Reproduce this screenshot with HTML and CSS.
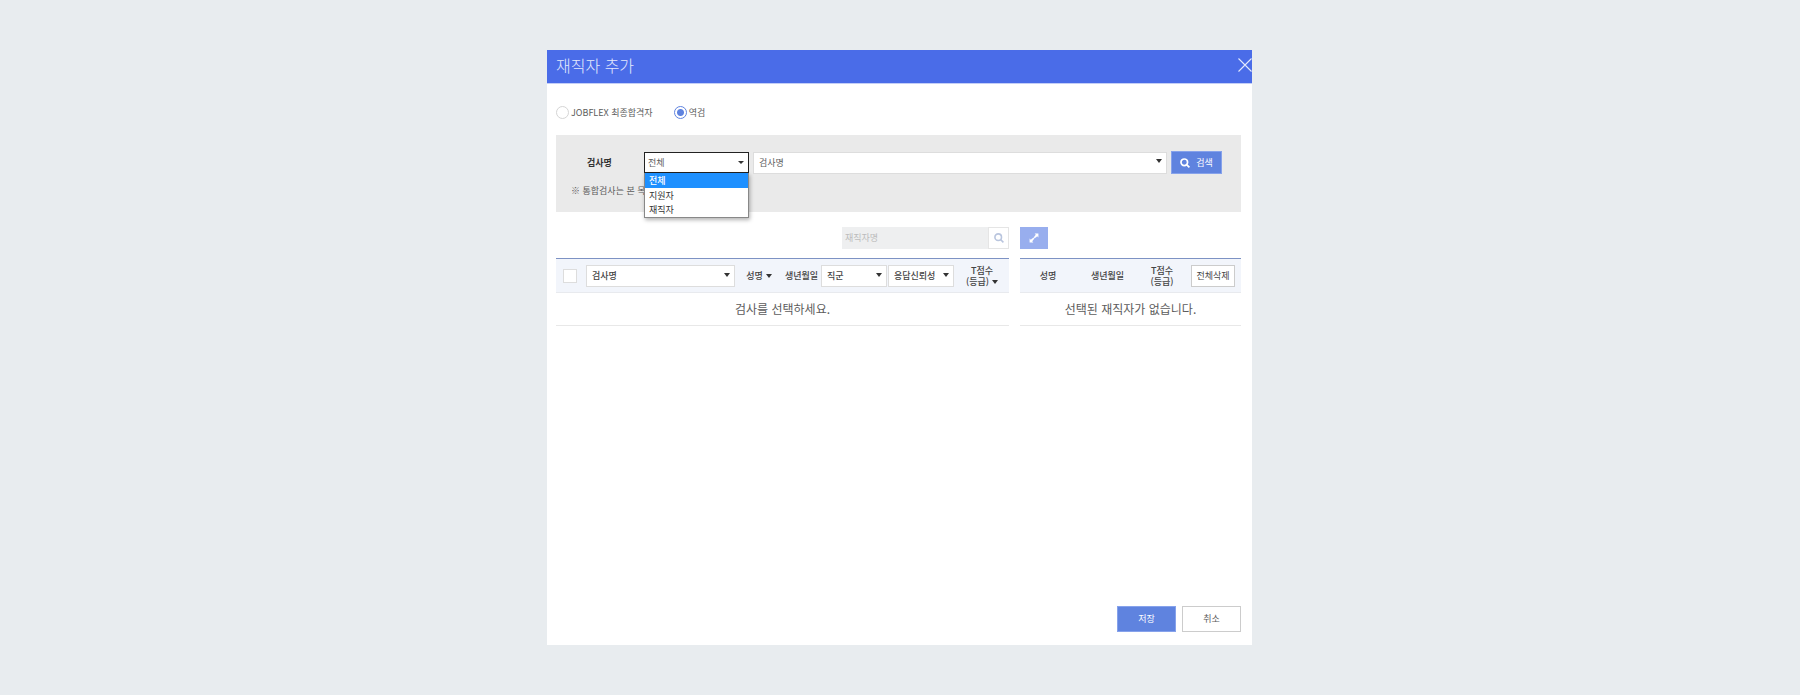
FILE: index.html
```html
<!DOCTYPE html>
<html lang="ko">
<head>
<meta charset="utf-8">
<title>재직자 추가</title>
<link rel="stylesheet" href="styles.css">
</head>
<body>
<main class="modal">
  <header class="modal-header">
    <h1 class="modal-title">재직자 추가</h1>
    <button class="close" type="button" aria-label="닫기">
      <svg viewBox="0 0 14 14" width="14" height="14" fill="none" stroke="currentColor" stroke-width="1.1"><path d="M.5.5l13 13M13.5.5l-13 13"/></svg>
    </button>
  </header>

  <div class="modal-body">
    <div class="sources">
      <label class="radio"><input type="radio" name="source">JOBFLEX 최종합격자</label>
      <label class="radio"><input type="radio" name="source" checked>역검</label>
    </div>

    <form class="filter">
      <div class="filter-row">
        <label class="filter-label" for="target">검사명</label>
        <div class="select target-select">
          <select id="target"><option>전체</option><option>지원자</option><option>재직자</option></select>
          <ul class="options">
            <li class="option option-active">전체</li>
            <li class="option">지원자</li>
            <li class="option">재직자</li>
          </ul>
        </div>
        <div class="select test-select">
          <select aria-label="검사명 선택"><option>검사명</option></select>
        </div>
        <button class="search-button" type="button">
          <svg viewBox="0 0 10 10" width="10" height="10" fill="none" stroke="currentColor" stroke-width="1.7"><circle cx="4.3" cy="4.3" r="3.3"/><path d="M6.6 6.6L9.4 9.4"/></svg>
          검색
        </button>
      </div>
      <p class="hint">※ 통합검사는 본 목</p>
    </form>

    <div class="lists">
      <section class="list">
        <div class="toolbar toolbar-end">
          <div class="name-search">
            <input class="name-input" type="text" placeholder="재직자명" aria-label="재직자명" disabled>
            <button class="name-button" type="button" aria-label="재직자 검색">
              <svg viewBox="0 0 10 10" width="10" height="10" fill="none" stroke="currentColor" stroke-width="1.6"><circle cx="4.2" cy="4.2" r="3.3"/><path d="M6.5 6.5L9.4 9.4"/></svg>
            </button>
          </div>
        </div>
        <table class="table">
          <colgroup><col class="c-check"><col class="c-test"><col class="c-name"><col class="c-birth"><col class="c-job"><col class="c-trust"><col></colgroup>
          <thead>
            <tr>
              <th><input class="check" type="checkbox" aria-label="전체 선택"></th>
              <th><div class="select head-select"><select aria-label="검사명"><option>검사명</option></select></div></th>
              <th><span class="sort">성명</span></th>
              <th>생년월일</th>
              <th><div class="select head-select"><select aria-label="직군"><option>직군</option></select></div></th>
              <th><div class="select head-select"><select aria-label="응답신뢰성"><option>응답신뢰성</option></select></div></th>
              <th>T점수<br><span class="sort">(등급)</span></th>
            </tr>
          </thead>
          <tbody><tr><td colspan="7">검사를 선택하세요.</td></tr></tbody>
        </table>
      </section>

      <section class="list">
        <div class="toolbar">
          <button class="expand" type="button" aria-label="확장">
            <svg viewBox="0 0 10 10" width="10" height="10" fill="currentColor"><path d="M5.6 .6H9.4V4.4L8.2 3.2L6.6 4.7L5.3 3.4L6.8 1.8ZM4.4 9.4H.6V5.6L1.8 6.8L3.4 5.3L4.7 6.6L3.2 8.2Z"/><path d="M3.2 6L6 3.2L6.8 4L4 6.8Z"/></svg>
          </button>
        </div>
        <table class="table">
          <colgroup><col class="c-picked"><col class="c-picked-birth"><col class="c-score"><col></colgroup>
          <thead>
            <tr>
              <th>성명</th>
              <th>생년월일</th>
              <th>T점수<br>(등급)</th>
              <th><button class="clear" type="button">전체삭제</button></th>
            </tr>
          </thead>
          <tbody><tr><td colspan="4">선택된 재직자가 없습니다.</td></tr></tbody>
        </table>
      </section>
    </div>
  </div>

  <footer class="modal-footer">
    <button class="action action-primary" type="button">저장</button>
    <button class="action" type="button">취소</button>
  </footer>
</main>
</body>
</html>
```
FILE: styles.css
```css
* {
  box-sizing: border-box;
}

body {
  margin: 0;
  padding: 50px 17px 50px 16px;
  background: #e8ecef;
  color: #5c5c5c;
  font-family: "Noto Sans CJK KR", sans-serif;
  font-size: 9px;
  line-height: 12px;
}

button,
input,
select {
  margin: 0;
  font: inherit;
  color: inherit;
  border-radius: 0;
}

button {
  display: flex;
  align-items: center;
  justify-content: center;
  padding: 0;
  border: 0;
  white-space: nowrap;
}

svg {
  display: block;
  flex: none;
}

.modal {
  display: flex;
  flex-direction: column;
  max-width: 705px;
  min-height: calc(100vh - 100px);
  margin: 0 auto;
  background: #fff;
}

.modal-header {
  display: flex;
  align-items: center;
  justify-content: space-between;
  height: 34px;
  padding-left: 9px;
  padding-bottom: 4px;
  background: #4a6ce8;
  border-bottom: 1px solid #c3cef7;
  color: #e3e9fd;
}

.modal-title {
  margin: 0;
  font-size: 16px;
  font-weight: 300;
  line-height: 24px;
}

.close {
  background: none;
}

.modal-body {
  padding: 22px 11px 16px 9px;
}

.sources {
  display: flex;
  gap: 21px;
}

.radio {
  display: flex;
  align-items: center;
  gap: 2px;
}

.radio input {
  appearance: none;
  width: 13px;
  height: 13px;
  border: 1px solid #d5d5d5;
  border-radius: 50%;
  background: #fff;
}

.radio input:checked {
  border-color: #5f83df;
  background: radial-gradient(circle, #5f83df 3px, #fff 4px);
}

.filter {
  margin-top: 16px;
  padding: 16px 19px 15px 15px;
  background: #eaeaea;
}

.filter-row {
  display: flex;
  align-items: center;
  gap: 4px;
}

.filter-label {
  width: 69px;
  padding-left: 16px;
  color: #333;
  font-weight: 700;
}

.select {
  position: relative;
}

.select::after {
  content: "";
  position: absolute;
  top: 8px;
  right: 5px;
  border: 3px solid transparent;
  border-top: 4px solid #333;
  border-bottom: 0;
  pointer-events: none;
}

.select select {
  display: block;
  appearance: none;
  width: 100%;
  height: 22px;
  padding: 0 5px;
  border: 1px solid #ddd;
  background: #fff;
}

.target-select {
  width: 105px;
}

.target-select select {
  height: 21px;
  padding: 0 3px;
  border-color: #222;
  outline: 0;
}

.target-select::after {
  top: 9px;
  border-top-width: 3px;
}

.options {
  position: absolute;
  z-index: 1;
  top: 100%;
  left: 0;
  right: 0;
  margin: 0;
  padding: 0;
  border: 1px solid #888;
  border-top: 0;
  background: #fff;
  box-shadow: 1px 2px 4px rgba(0, 0, 0, 0.3);
  color: #333;
  list-style: none;
}

.option {
  padding: 0 4px;
  line-height: 15px;
}

.option:last-child {
  line-height: 14px;
}

.option-active {
  background: #1e90ff;
  color: #fff;
  font-weight: 500;
}

.test-select {
  flex: 1;
}

.test-select::after {
  top: 7px;
}

.search-button {
  gap: 6px;
  width: 51px;
  height: 23px;
  border: 1px solid #86a2eb;
  background: #5f83df;
  color: #fff;
}

.hint {
  margin: 11px 0 0;
}

.lists {
  display: grid;
  grid-template-columns: 453fr 221fr;
  gap: 11px;
  margin-top: 15px;
}

.toolbar {
  display: flex;
  height: 22px;
  margin-bottom: 9px;
}

.toolbar-end {
  justify-content: flex-end;
}

.name-search {
  display: flex;
  width: 167px;
}

.name-input {
  flex: 1;
  min-width: 0;
  padding: 0 3px;
  border: 0;
  background: #eeeff0;
}

.name-input::placeholder {
  color: #bcbcbc;
}

.name-button {
  width: 21px;
  border: 1px solid #e5e5e5;
  background: #fff;
  color: #b9c5de;
}

.expand {
  width: 28px;
  background: #98aeee;
  color: #fff;
}

.table {
  width: 100%;
  table-layout: fixed;
  border-collapse: separate;
  border-spacing: 0;
  border-top: 1px solid #7d92c4;
}

.table th {
  height: 34px;
  padding: 0;
  border-bottom: 1px solid #e8eaee;
  background: #f2f5fb;
  color: #444;
  font-weight: 500;
  line-height: 11px;
  white-space: nowrap;
}

.table td {
  height: 33px;
  padding: 0;
  border-bottom: 1px solid #e8e8e8;
  font-size: 12px;
  line-height: 18px;
  text-align: center;
}

.c-check { width: 30px; }
.c-test { width: 150px; }
.c-name { width: 46px; }
.c-birth { width: 39px; }
.c-job,
.c-trust { width: 67px; }
.c-picked { width: 56px; }
.c-picked-birth { width: 63px; }
.c-score { width: 46px; }

.check {
  display: block;
  appearance: none;
  width: 14px;
  height: 14px;
  margin-left: 7px;
  border: 1px solid #ddd;
  background: #fff;
}

.head-select {
  margin-right: 1px;
}

.sort::after {
  content: "";
  display: inline-block;
  margin-left: 3px;
  border: 3px solid transparent;
  border-top: 4px solid #333;
  border-bottom: 0;
  vertical-align: 1px;
}

.clear {
  width: 44px;
  height: 22px;
  margin: 0 auto;
  border: 1px solid #ccc;
  background: #fff;
  font-weight: 400;
}

.modal-footer {
  display: flex;
  justify-content: flex-end;
  gap: 6px;
  margin-top: auto;
  padding: 0 11px 13px;
}

.action {
  width: 59px;
  height: 26px;
  border: 1px solid #ccc;
  background: #fff;
}

.action-primary {
  border-color: #86a2eb;
  background: #5f83df;
  color: #fff;
}
```
